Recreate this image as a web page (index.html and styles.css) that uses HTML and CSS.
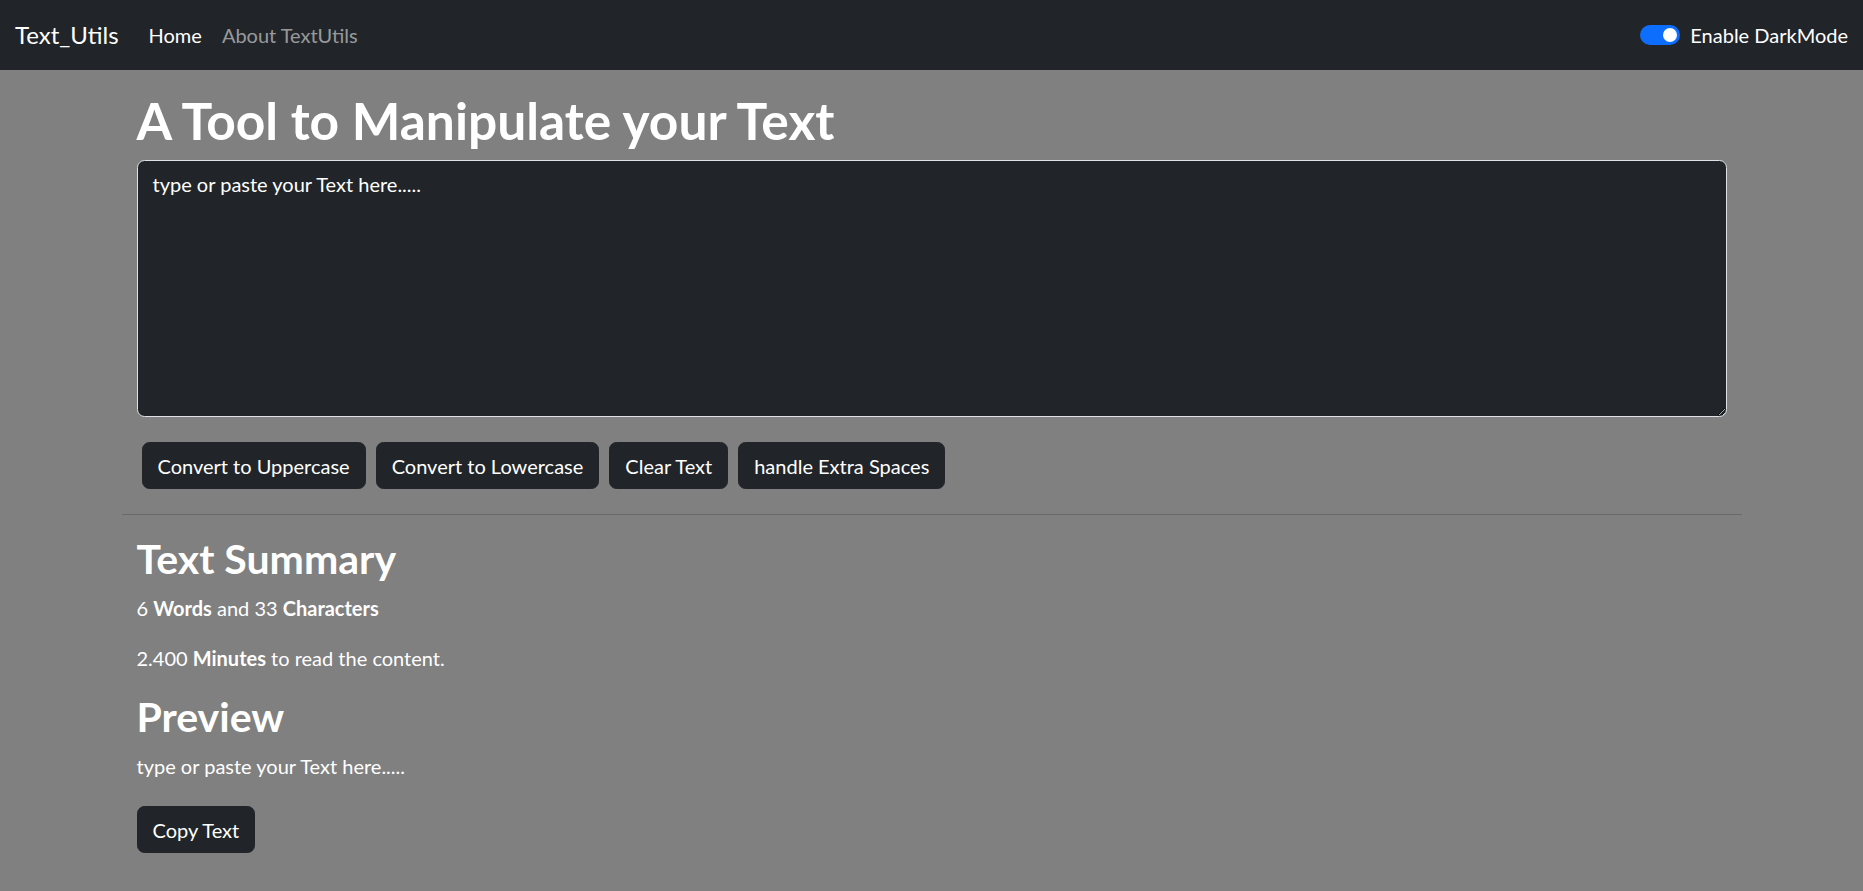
FILE: index.html
```html
<!DOCTYPE html>
<html lang="en">
<head>
    <meta charset="UTF-8">
    <meta name="viewport" content="width=device-width, initial-scale=1.0">
    <title>TextUtils - Home</title>
    <link rel="stylesheet" href="styles.css">
</head>
<body>
    <header>
        <nav class="navbar">
            <a class="brand" href="#">Text_Utils</a>
            <ul class="nav-links">
                <li><a class="active" href="#">Home</a></li>
                <li><a href="#">About TextUtils</a></li>
            </ul>
            <label class="mode-switch">
                <span class="switch-track"><span class="switch-knob"></span></span>
                Enable DarkMode
            </label>
        </nav>
    </header>

    <main class="container">
        <div class="container inner">
            <h1>A Tool to Manipulate your Text</h1>
            <div class="mb-3">
                <textarea class="text-box" id="myBox" rows="8">type or paste your Text here.....</textarea>
            </div>
            <div class="btn-row">
                <button class="btn">Convert to Uppercase</button>
                <button class="btn">Convert to Lowercase</button>
                <button class="btn">Clear Text</button>
                <button class="btn">handle Extra Spaces</button>
            </div>
        </div>
        <hr>
        <div class="container inner">
            <h2>Text Summary</h2>
            <p>6 <b>Words</b> and 33 <b>Characters</b></p>
            <p>2.400 <b>Minutes</b> to read the content.</p>
            <h2>Preview</h2>
            <p>type or paste your Text here.....</p>
            <button class="btn">Copy Text</button>
        </div>
    </main>
</body>
</html>
```
FILE: styles.css
```css
:root {
    --dark: #212529;
    --page-bg: #808080;
    --muted-link: rgba(255, 255, 255, 0.55);
    --switch-on: #0d6efd;
}

* {
    margin: 0;
    padding: 0;
    box-sizing: border-box;
}

body {
    font-family: 'Lato', 'Liberation Sans', sans-serif;
    font-size: 20px;
    line-height: 1.5;
    color: white;
    background-color: var(--page-bg);
}

/* navbar */
.navbar {
    display: flex;
    align-items: center;
    height: 70px;
    padding: 0 15px;
    background-color: var(--dark);
}

.brand {
    font-size: 24px;
    color: white;
    text-decoration: none;
    margin-right: 20px;
}

.nav-links {
    display: flex;
    list-style: none;
}

.nav-links a {
    display: block;
    padding: 10px;
    color: var(--muted-link);
    text-decoration: none;
}

.nav-links a.active {
    color: white;
}

.mode-switch {
    margin-left: auto;
    display: flex;
    align-items: center;
    gap: 10px;
}

.switch-track {
    display: flex;
    justify-content: flex-end;
    align-items: center;
    width: 40px;
    height: 20px;
    padding: 0 3px;
    border-radius: 10px;
    background-color: var(--switch-on);
}

.switch-knob {
    width: 14px;
    height: 14px;
    border-radius: 50%;
    background-color: white;
}

/* content */
.container {
    max-width: 1650px;
    margin: 20px auto;
    padding: 0 15px;
}

.container.inner {
    margin: 0;
}

h1 {
    font-size: 51.5px;
    font-weight: 700;
    line-height: 60px;
    margin-bottom: 10px;
}

h2 {
    font-size: 41px;
    font-weight: 700;
    line-height: 48px;
    margin-bottom: 10px;
}

p {
    margin-bottom: 20px;
}

.mb-3 {
    margin-bottom: 20px;
}

.text-box {
    display: block;
    width: 100%;
    padding: 7.5px 15px;
    font: inherit;
    line-height: 1.5;
    color: white;
    background-color: var(--dark);
    border: 1px solid #dee2e6;
    border-radius: 7.5px;
    outline: none;
}

.btn-row {
    display: flex;
}

.btn {
    margin: 5px;
    padding: 7.5px 15px;
    font: inherit;
    color: white;
    background-color: var(--dark);
    border: 1px solid var(--dark);
    border-radius: 7.5px;
    cursor: pointer;
}

.inner > .btn {
    margin-left: 0;
}

hr {
    margin: 20px 0;
    border: 0;
    border-top: 1px solid rgba(33, 37, 41, 0.25);
}
```
